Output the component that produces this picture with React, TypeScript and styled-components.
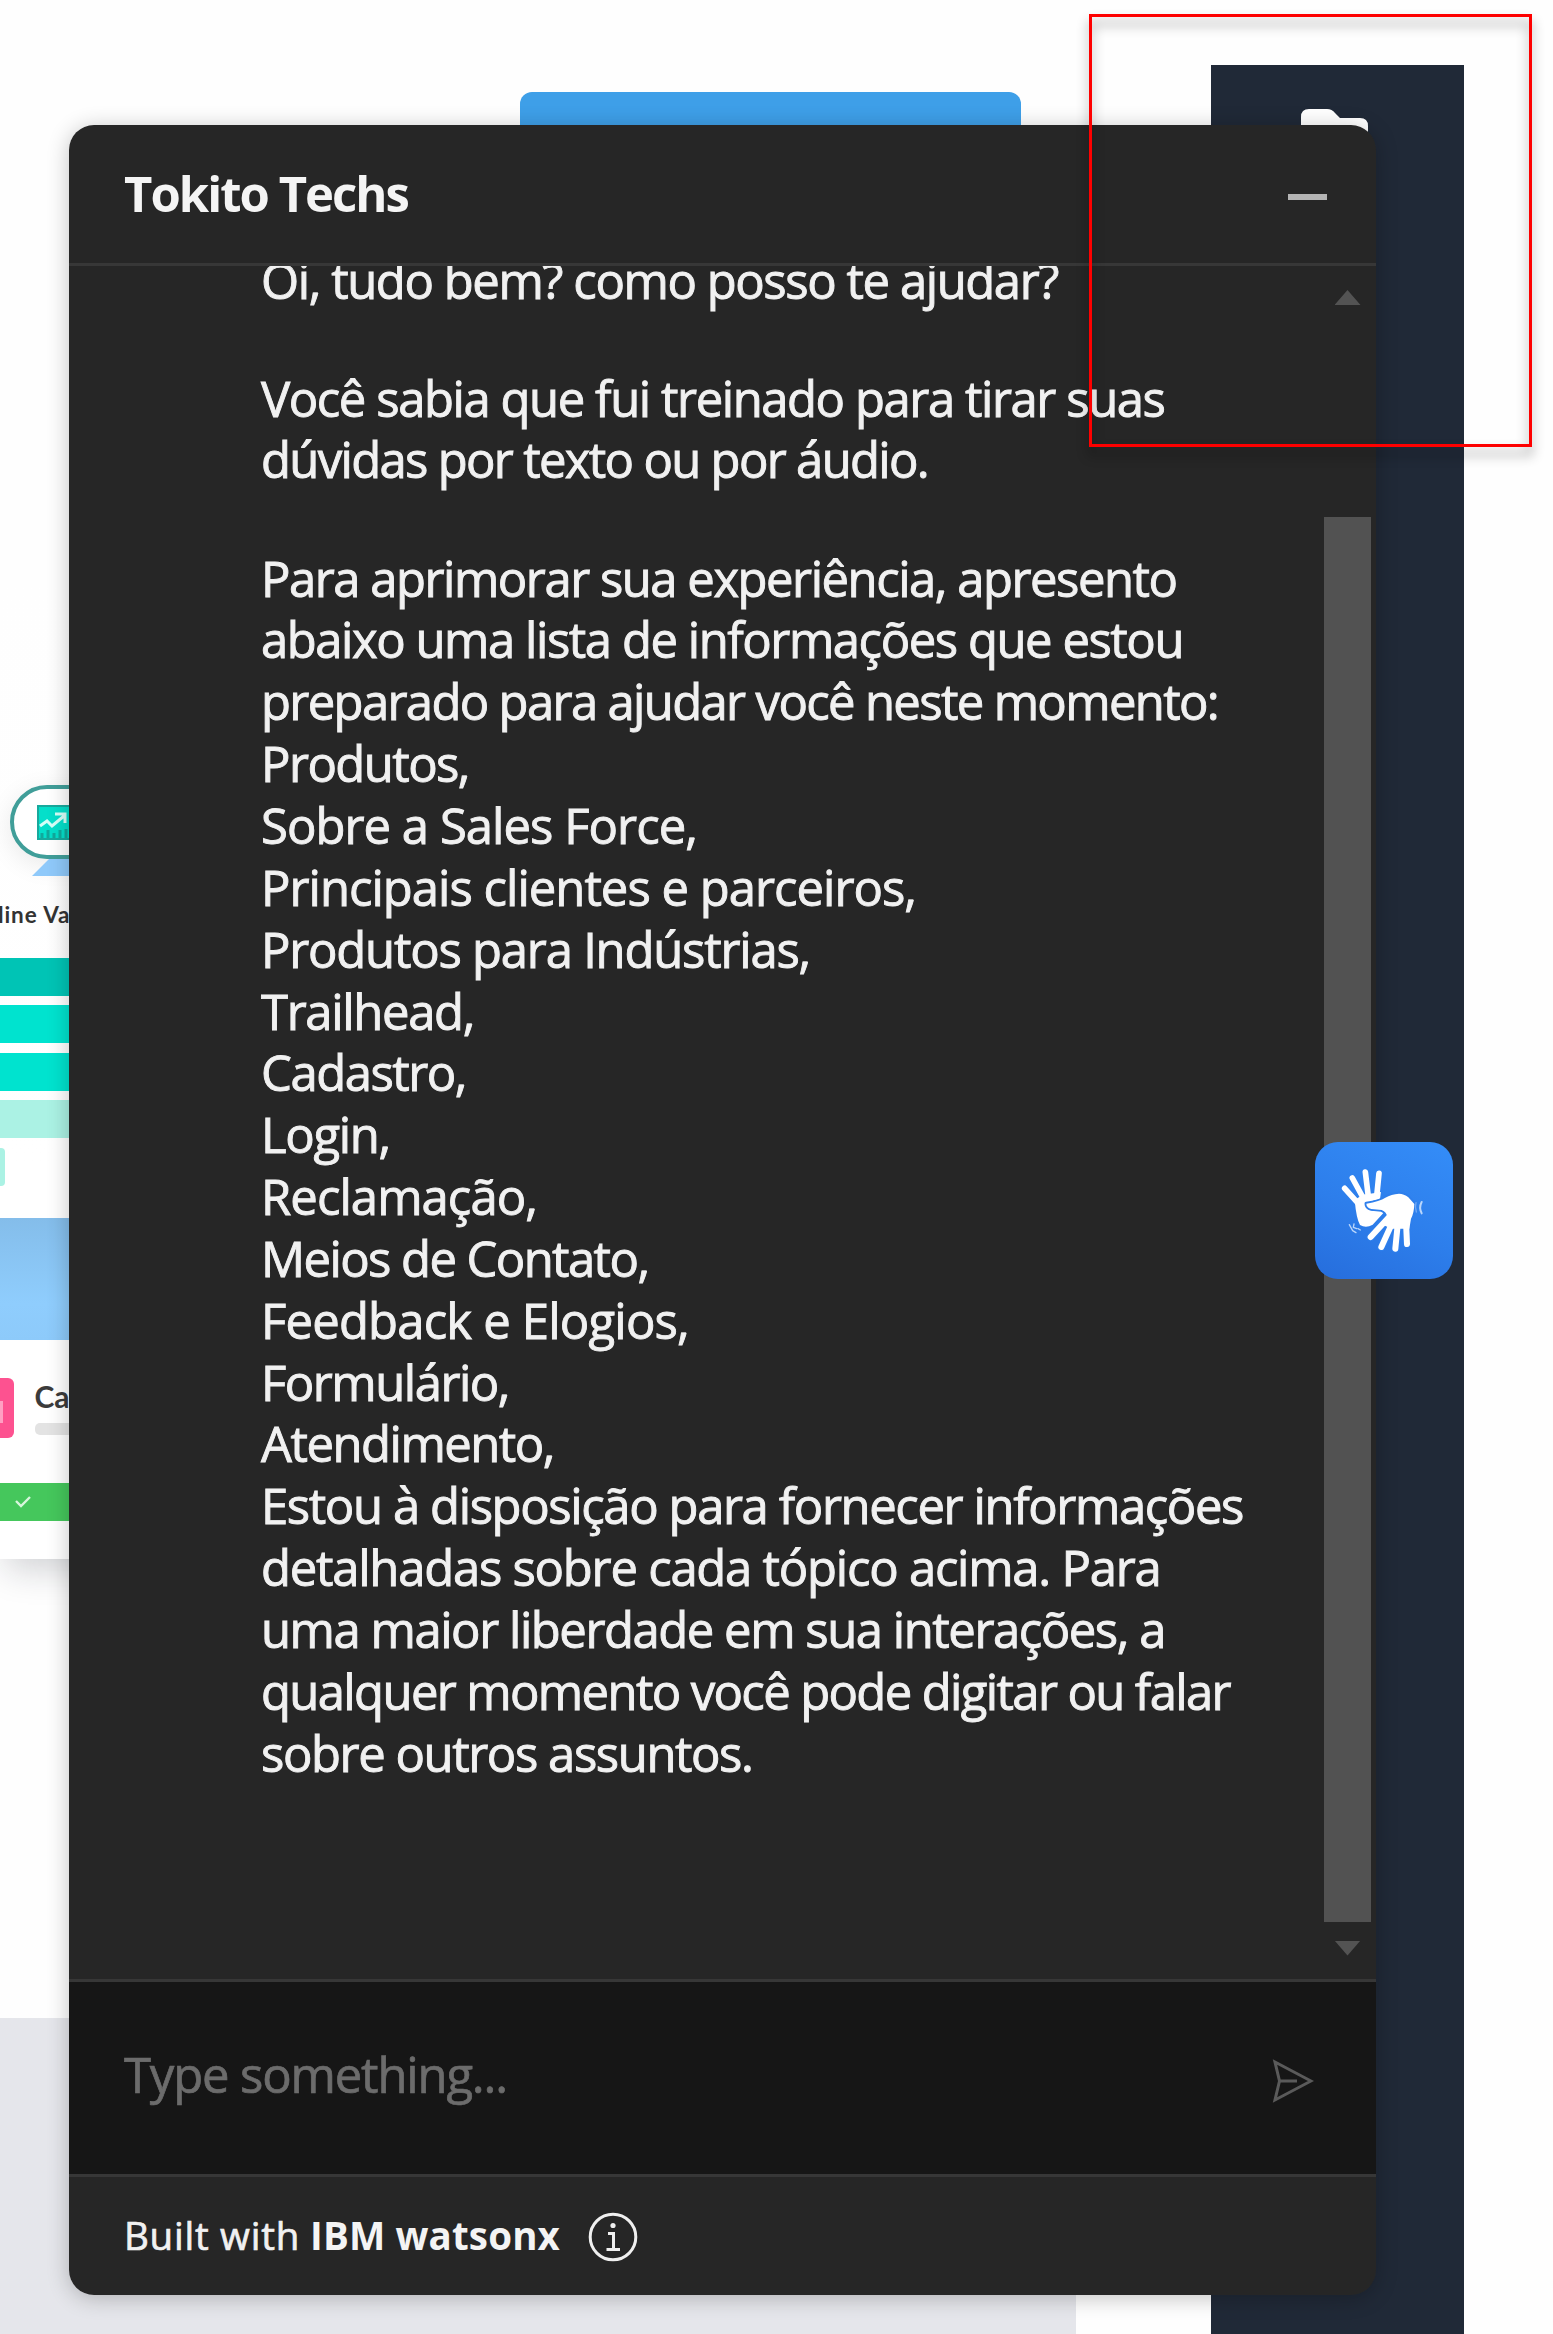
import React, { useLayoutEffect, useRef, useState } from "react";
import styled, { createGlobalStyle } from "styled-components";

const GlobalStyle = createGlobalStyle`
  *, *::before, *::after { box-sizing: border-box; }
  body { margin: 0; background: #fefefe; }
`;

const sans = `"Open Sans", "Noto Sans", sans-serif`;

/* ---------- Site behind the chat ---------- */

const Page = styled.div`
  position: relative;
  display: flex;
  width: 1553px;
  height: 2334px;
  overflow: hidden;
  background: #fefefe;
  font-family: ${sans};
`;

const SiteMain = styled.main`
  display: flex;
  flex-direction: column;
  width: 1211px;
`;

const CallToAction = styled.div`
  width: 501px;
  height: 110px;
  margin: 92px 0 0 520px;
  border-radius: 12px;
  background: #3e9fe8;
`;

const Illustration = styled.section`
  display: flex;
  flex-direction: column;
  width: 260px;
  height: 976px;
  margin-top: 381px;
  background: linear-gradient(#fefefe, #fff 60%);
  box-shadow: 0 16px 34px -6px rgba(20, 25, 40, 0.2);
  clip-path: inset(0 0 -100px 0);
`;

const Pill = styled.div`
  display: flex;
  align-items: center;
  flex: none;
  width: 200px;
  height: 74px;
  margin: 202px 0 0 10px;
  padding-left: 23px;
  border: 4px solid #409e99;
  border-radius: 37px;
  background: #fff;
  box-shadow: 0 6px 26px rgba(0, 0, 0, 0.09);
`;

const PillTail = styled.div`
  flex: none;
  width: 120px;
  height: 17px;
  margin-left: 32px;
  background: #8fc9fa;
  clip-path: polygon(17px 0, 100% 0, 100% 100%, 0 100%);
`;

const ChartLabel = styled.div`
  flex: none;
  height: 30px;
  margin: 24px 0 28px -2px;
  color: #333;
  font: 700 22.5px/30px Lato, sans-serif;
  letter-spacing: 0.9px;
  white-space: nowrap;
`;

const Bar = styled.div<{ $tone: string; $width?: number }>`
  flex: none;
  width: ${(p) => p.$width ?? 260}px;
  height: 38px;
  margin-bottom: 9.4px;
  border-radius: 0 4px 4px 0;
  background: ${(p) => p.$tone};
`;

const BlueBand = styled.div`
  flex: none;
  height: 122px;
  margin-top: 23px;
  background: linear-gradient(#84bdea, #8fcdfd 70%, #8dcafa);
`;

const CardRow = styled.div`
  display: flex;
  flex: none;
  gap: 21px;
  height: 60px;
  margin-top: 38px;
`;

const PinkTile = styled.div`
  display: flex;
  align-items: center;
  width: 13.5px;
  border-radius: 0 6px 6px 0;
  background: #fd5290;

  &::before {
    content: "";
    width: 3px;
    height: 22px;
    margin-top: 8px;
    background: #ff9fc2;
  }
`;

const CardCopy = styled.div`
  display: flex;
  flex-direction: column;
  color: #3b3b3b;
  font: 700 30px/36px Lato, sans-serif;
`;

const CardStub = styled.div`
  width: 110px;
  height: 12px;
  margin-top: 9px;
  border-radius: 5px;
  background: #e3e3e3;
`;

const GreenBar = styled.div`
  display: flex;
  align-items: center;
  flex: none;
  height: 38.5px;
  margin-top: 45px;
  padding-left: 15px;
  background: #45c75c;
`;

const SiteFooter = styled.footer`
  width: 1076px;
  height: 316px;
  margin-top: 459px;
  background: #e5e6eb;
`;

const Sidebar = styled.aside`
  width: 253px;
  margin-top: 65px;
  padding: 44px 0 0 90px;
  background: #202937;
`;

/* ---------- Chat window ---------- */

const ChatWindow = styled.section`
  position: absolute;
  top: 125px;
  left: 69px;
  display: flex;
  flex-direction: column;
  width: 1307px;
  height: 2170px;
  overflow: hidden;
  border-radius: 25px;
  background: #262626;
  color: #f1f1f1;
`;

const ChatShadow = styled.div`
  position: absolute;
  top: 125px;
  left: 69px;
  width: 1307px;
  height: 2170px;
  border-radius: 25px;
  box-shadow: 0 3px 22px rgba(0, 0, 0, 0.24);
`;

const ChatHeader = styled.header`
  display: flex;
  align-items: center;
  justify-content: space-between;
  flex: none;
  height: 141px;
  padding: 0 49px 0 55px;
  border-bottom: 3px solid #373737;
`;

const Title = styled.h1`
  margin: -3px 0 0;
  color: #f4f4f4;
  font-size: 49px;
  font-weight: 700;
  line-height: 62px;
`;

const Minimize = styled.div`
  width: 39px;
  height: 6px;
  margin-top: 6px;
  background: #b4b4b4;
`;

const ChatBody = styled.div`
  display: flex;
  flex: none;
  justify-content: space-between;
  height: 1713px;
  overflow: hidden;
`;

const Messages = styled.div`
  display: flex;
  flex-direction: column;
  gap: 56.3px;
  margin-top: -16.5px;
  padding-left: 192px;
  font-size: 49px;
  line-height: 61.84px;
  -webkit-text-stroke: 0.9px currentColor;
`;

const Paragraph = styled.p`
  margin: 0;
`;

const Line = styled.span`
  display: block;
  width: max-content;
  white-space: nowrap;
`;

const Scrollbar = styled.div`
  display: flex;
  flex-direction: column;
  align-items: center;
  width: 47px;
  margin-right: 5px;
  padding-top: 24px;
`;

const Arrow = styled.div<{ $down?: boolean }>`
  width: 26px;
  height: 15px;
  background: #535353;
  clip-path: ${(p) =>
    p.$down ? "polygon(0 0, 100% 0, 50% 100%)" : "polygon(50% 0, 100% 100%, 0 100%)"};
`;

const Thumb = styled.div`
  width: 47px;
  height: 1405px;
  margin: 211.5px 0 19px;
  background: #525252;
`;

const Composer = styled.div`
  display: flex;
  align-items: center;
  justify-content: space-between;
  flex: none;
  height: 198px;
  padding: 0 62px 0 55px;
  border-top: 3px solid #373737;
  border-bottom: 3px solid #373737;
  background: #161616;
`;

const Placeholder = styled.div`
  margin-top: -9px;
  color: #6c6c6c;
  font-size: 49px;
  line-height: 62px;
  -webkit-text-stroke: 0.7px currentColor;
`;

const SendIcon = styled.svg`
  margin-top: 5px;
`;

const ChatFooter = styled.footer`
  display: flex;
  align-items: center;
  height: 118px;
  padding-left: 55px;
  font-size: 38.5px;
  line-height: 50px;
`;

const BuiltWith = styled.span`
  margin-top: -3px;
  -webkit-text-stroke: 0.7px currentColor;
`;

const Strong = styled.strong`
  margin: -3px 0 0 10px;
  color: #f4f4f4;
  font-weight: 700;
`;

const InfoIcon = styled.svg`
  margin: 2px 0 0 28px;
`;

/* ---------- Floating overlays ---------- */

const SignButton = styled.button`
  position: absolute;
  top: 1142px;
  left: 1315px;
  display: flex;
  width: 138px;
  height: 137px;
  padding: 8px 0 0 15px;
  border: 0;
  border-radius: 23px;
  background: linear-gradient(205deg, #348df8, #2d7eeb 55%, #266ddc);
`;

const Highlight = styled.div`
  position: absolute;
  top: 14px;
  left: 1089px;
  width: 443px;
  height: 433px;
  border: 3px solid #fe0000;
  filter: drop-shadow(0 8px 6px rgba(0, 0, 0, 0.44));
`;

/* Spreads a line of text over a fixed measure by adjusting its tracking. */
function FitText({ text, width }: { text: string; width: number }) {
  const ref = useRef<HTMLSpanElement>(null);
  const [tracking, setTracking] = useState(0);
  useLayoutEffect(() => {
    if (ref.current) {
      const natural = ref.current.getBoundingClientRect().width;
      setTracking((width - natural) / text.length);
    }
  }, [text, width]);
  return (
    <Line ref={ref} style={{ letterSpacing: tracking }}>
      {text}
    </Line>
  );
}

const paragraphs: [string, number][][] = [
  [["Oi, tudo bem? como posso te ajudar?", 797]],
  [
    ["Você sabia que fui treinado para tirar suas", 903.5],
    ["dúvidas por texto ou por áudio.", 667],
  ],
  [
    ["Para aprimorar sua experiência, apresento", 915.5],
    ["abaixo uma lista de informações que estou", 922],
    ["preparado para ajudar você neste momento:", 957],
    ["Produtos,", 208],
    ["Sobre a Sales Force,", 436],
    ["Principais clientes e parceiros,", 655],
    ["Produtos para Indústrias,", 549],
    ["Trailhead,", 213],
    ["Cadastro,", 205],
    ["Login,", 129],
    ["Reclamação,", 276],
    ["Meios de Contato,", 387.5],
    ["Feedback e Elogios,", 428],
    ["Formulário,", 248],
    ["Atendimento,", 293],
    ["Estou à disposição para fornecer informações", 982],
    ["detalhadas sobre cada tópico acima. Para", 899.5],
    ["uma maior liberdade em sua interações, a", 904],
    ["qualquer momento você pode digitar ou falar", 969],
    ["sobre outros assuntos.", 491.5],
  ],
];

const leftHand =
  "M74 150 L98 134 L130 130 L153 126 L150 146 L110 158 L125 182 L165 184 L128 224 Q108 236 90 225 Q79 206 74 150Z";
const rightHand =
  "M109 161 Q150 154 166 143 Q184 132 207 131 Q222 131 235 142 L253 162 Q252 190 243 206 L238 236 L185 236 L158 224 L172 202 Q170 186 155 180 L124 177 Q109 173 109 161Z";
const leftFingers = "M44 115 L88 164 M67 84 L103 150 M106 66 L115 140 M147 70 L140 140";
const rightFingers = "M178 200 L122 261 M187 218 L154 291 M203 225 L196 296 M228 215 L231 282";

function SignLanguageIcon() {
  return (
    <svg width="100" height="110" viewBox="0 0 300 330" fill="#fff" strokeLinecap="round" strokeLinejoin="round">
      <path d={leftFingers} fill="none" stroke="#fff" strokeWidth="17" />
      <path d={leftHand} />
      <path d={rightHand} stroke="#2e7fec" strokeWidth="11" />
      <path d={rightFingers} fill="none" stroke="#2e7fec" strokeWidth="24" />
      <path d={rightFingers} fill="none" stroke="#fff" strokeWidth="18" />
      <path d={rightHand} />
      <g fill="none" stroke="#b9d6fb" strokeWidth="4">
        <path d="M58 224 l10 18 M72 222 l-2 10 l10 4 M68 242 l10 6 M84 236 l7 4" />
        <path d="M258 158 q-4 14 1 28" opacity="0.5" />
        <path d="M275 156 q-9 17 0 34" strokeWidth="6" />
      </g>
    </svg>
  );
}

export default function App() {
  return (
    <Page>
      <GlobalStyle />
      <SiteMain>
        <CallToAction />
        <Illustration>
          <Pill>
            <svg width="36" height="35" viewBox="0 0 36 35">
              <rect x="1" y="1" width="34" height="33" fill="#05dfca" stroke="#18a99d" strokeWidth="2" />
              <path d="M5 33v-5M11 33v-8M17 33v-5M23 33v-8M29 33v-9" stroke="#10a99c" strokeWidth="3" />
              <path d="M3 21l7-5 5 5 12-10M18 9h10v9" fill="none" stroke="#d6fff8" strokeWidth="3" />
            </svg>
          </Pill>
          <PillTail />
          <ChartLabel>line Va</ChartLabel>
          <Bar $tone="#00c4b5" />
          <Bar $tone="#00e3cf" />
          <Bar $tone="#00e3cf" />
          <Bar $tone="#abf2e4" />
          <Bar $tone="#abf2e4" $width={4.5} />
          <BlueBand />
          <CardRow>
            <PinkTile />
            <CardCopy>
              Ca
              <CardStub />
            </CardCopy>
          </CardRow>
          <GreenBar>
            <svg width="16" height="12" viewBox="0 0 16 12" fill="none" stroke="#d8f6dc" strokeWidth="2.4">
              <path d="M1 5l5 5 9-9" />
            </svg>
          </GreenBar>
        </Illustration>
        <SiteFooter />
      </SiteMain>
      <Sidebar>
        <svg width="67" height="50" viewBox="0 0 67 50" fill="#fff">
          <path d="M0 8Q0 0 8 0H26Q31 0 34 4L39 9H59Q67 9 67 17V50H0Z" />
        </svg>
      </Sidebar>

      <ChatShadow />
      <ChatWindow>
        <ChatHeader>
          <Title>
            <FitText text="Tokito Techs" width={284} />
          </Title>
          <Minimize />
        </ChatHeader>
        <ChatBody>
          <Messages>
            {paragraphs.map((lines, i) => (
              <Paragraph key={i}>
                {lines.map(([text, width]) => (
                  <FitText key={text} text={text} width={width} />
                ))}
              </Paragraph>
            ))}
          </Messages>
          <Scrollbar>
            <Arrow />
            <Thumb />
            <Arrow $down />
          </Scrollbar>
        </ChatBody>
        <Composer>
          <Placeholder>
            <FitText text="Type something..." width={383} />
          </Placeholder>
          <SendIcon width="43" height="44" viewBox="0 0 43 44" fill="none" stroke="#5a5a5a" strokeWidth="3">
            <path d="M4 3L40 22L4 41L8.500 22ZM8.500 22H26" />
          </SendIcon>
        </Composer>
        <ChatFooter>
          <BuiltWith>
            <FitText text="Built with" width={176} />
          </BuiltWith>
          <Strong>
            <FitText text="IBM watsonx" width={250} />
          </Strong>
          <InfoIcon width="50" height="50" viewBox="0 0 50 50" fill="none" stroke="#f0f0f0" strokeWidth="3">
            <circle cx="25" cy="25" r="22.800" />
            <path d="M20 21.500H25.500V37M18.500 37.500H32" />
            <circle cx="25" cy="13.500" r="2.600" fill="#f0f0f0" stroke="none" />
          </InfoIcon>
        </ChatFooter>
      </ChatWindow>

      <SignButton aria-label="Libras">
        <SignLanguageIcon />
      </SignButton>
      <Highlight />
    </Page>
  );
}
